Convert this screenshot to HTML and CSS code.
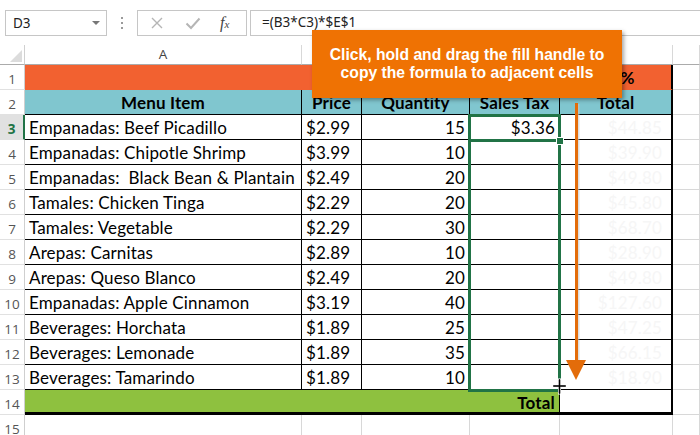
FILE: index.html
```html
<!DOCTYPE html>
<html>
<head>
<meta charset="utf-8">
<link rel="stylesheet" href="styles.css">
</head>
<body>
<div class="app">
  <div class="fbar">
    <div class="namebox"><span class="nb-text">D3</span><span class="nb-arrow"></span></div>
    <div class="grip"><i></i><i></i><i></i></div>
    <div class="fbtns">
      <svg class="ic" width="14" height="14" viewBox="0 0 14 14"><path d="M2 2 L12 12 M12 2 L2 12" stroke="#b5b5b5" stroke-width="1.4" fill="none"/></svg>
      <svg class="ic" width="16" height="14" viewBox="0 0 16 14"><path d="M1.5 7.5 L6 12 L14.5 2.5" stroke="#b5b5b5" stroke-width="2" fill="none"/></svg>
      <span class="fx"><span class="fx-f">f</span><span class="fx-x">x</span></span>
    </div>
    <div class="formula">=(B3*C3)*$E$1</div>
  </div>

  <div class="sheet">
    <div class="corner"><span class="tri"></span></div>
    <div class="ch">A</div><div class="ch"></div><div class="ch"></div><div class="ch"></div><div class="ch"></div><div class="ch"></div>

    <div class="rh">1</div>
    <div class="c orange span4"></div>
    <div class="c orange e bold center">7.5%</div>
    <div class="c"></div>

    <div class="rh">2</div>
    <div class="c t teal bold center">Menu Item</div>
    <div class="c t teal bold center">Price</div>
    <div class="c t teal bold center">Quantity</div>
    <div class="c t teal bold center">Sales Tax</div>
    <div class="c t teal bold center e">Total</div>
    <div class="c"></div>

    <div class="rh act">3</div>
    <div class="c t">Empanadas: Beef Picadillo</div><div class="c t">$2.99</div><div class="c t right">15</div><div class="c t right">$3.36</div><div class="c t e ghost">$44.85</div><div class="c"></div>

    <div class="rh">4</div>
    <div class="c t">Empanadas: Chipotle Shrimp</div><div class="c t">$3.99</div><div class="c t right">10</div><div class="c t"></div><div class="c t e ghost">$39.90</div><div class="c"></div>

    <div class="rh">5</div>
    <div class="c t">Empanadas:&nbsp; Black Bean &amp; Plantain</div><div class="c t">$2.49</div><div class="c t right">20</div><div class="c t"></div><div class="c t e ghost">$49.80</div><div class="c"></div>

    <div class="rh">6</div>
    <div class="c t">Tamales: Chicken Tinga</div><div class="c t">$2.29</div><div class="c t right">20</div><div class="c t"></div><div class="c t e ghost">$45.80</div><div class="c"></div>

    <div class="rh">7</div>
    <div class="c t">Tamales: Vegetable</div><div class="c t">$2.29</div><div class="c t right">30</div><div class="c t"></div><div class="c t e ghost">$68.70</div><div class="c"></div>

    <div class="rh">8</div>
    <div class="c t">Arepas: Carnitas</div><div class="c t">$2.89</div><div class="c t right">10</div><div class="c t"></div><div class="c t e ghost">$28.90</div><div class="c"></div>

    <div class="rh">9</div>
    <div class="c t">Arepas: Queso Blanco</div><div class="c t">$2.49</div><div class="c t right">20</div><div class="c t"></div><div class="c t e ghost">$49.80</div><div class="c"></div>

    <div class="rh">10</div>
    <div class="c t">Empanadas: Apple Cinnamon</div><div class="c t">$3.19</div><div class="c t right">40</div><div class="c t"></div><div class="c t e ghost">$127.60</div><div class="c"></div>

    <div class="rh">11</div>
    <div class="c t">Beverages: Horchata</div><div class="c t">$1.89</div><div class="c t right">25</div><div class="c t"></div><div class="c t e ghost">$47.25</div><div class="c"></div>

    <div class="rh">12</div>
    <div class="c t">Beverages: Lemonade</div><div class="c t">$1.89</div><div class="c t right">35</div><div class="c t"></div><div class="c t e ghost">$66.15</div><div class="c"></div>

    <div class="rh">13</div>
    <div class="c t">Beverages: Tamarindo</div><div class="c t">$1.89</div><div class="c t right">10</div><div class="c t"></div><div class="c t e ghost">$18.90</div><div class="c"></div>

    <div class="rh">14</div>
    <div class="c green span4 bold right tot">Total</div>
    <div class="c e tot"></div>
    <div class="c"></div>

    <div class="rh">15</div>
    <div class="c"></div><div class="c"></div><div class="c"></div><div class="c"></div><div class="c"></div><div class="c"></div>
  </div>

  <div class="sel"></div>
  <div class="active"></div>
  <div class="handle"></div>
  <svg class="arrow" width="24" height="280" viewBox="0 0 24 280">
    <rect x="11.5" y="1" width="3" height="258" fill="#c8c8c8" opacity="0.6"/>
    <rect x="10" y="0" width="3" height="258" fill="#e36c0a"/>
    <path d="M1 257 L21 257 L11 277 Z" fill="#e36c0a"/>
  </svg>
  <svg class="cursor" width="15" height="17" viewBox="0 0 15 17">
    <path d="M6 0.5 H9 V6.5 H14.5 V9.5 H9 V16.5 H6 V9.5 H0.5 V6.5 H6 Z" fill="#fff"/>
    <path d="M7 1.5 H8 V7.5 H13.5 V8.5 H8 V15.5 H7 V8.5 H1.5 V7.5 H7 Z" fill="#000" stroke="#000" stroke-width="0.6"/>
  </svg>
  <div class="callout">
    <span>Click, hold and drag the fill handle to</span>
    <span>copy the formula to adjacent cells</span>
  </div>
</div>
</body>
</html>
```

FILE: styles.css
```css
html, body {
  margin: 0;
  padding: 0;
  background: #fff;
}

.app {
  position: relative;
  width: 700px;
  height: 435px;
  overflow: hidden;
  font-family: "Lato", "Liberation Sans", sans-serif;
}

/* formula bar */
.fbar {
  height: 45px;
  box-sizing: border-box;
  padding: 10px 0 0 5px;
  display: flex;
  align-items: flex-start;
  font-family: "Noto Sans", "Open Sans", sans-serif;
  font-size: 13.5px;
  color: #222;
}

.namebox {
  width: 102px;
  height: 26px;
  box-sizing: border-box;
  border: 1px solid #c6c6c6;
  display: flex;
  align-items: center;
  justify-content: space-between;
  padding: 0 6px 0 7px;
}

.nb-arrow {
  width: 0;
  height: 0;
  border-left: 4px solid transparent;
  border-right: 4px solid transparent;
  border-top: 4px solid #777;
}

.grip {
  width: 30px;
  height: 26px;
  display: flex;
  flex-direction: column;
  align-items: center;
  justify-content: center;
  gap: 3px;
}

.grip i {
  display: block;
  width: 2px;
  height: 2px;
  background: #9a9a9a;
}

.fbtns {
  width: 110px;
  height: 26px;
  box-sizing: border-box;
  border: 1px solid #c6c6c6;
  display: flex;
  align-items: center;
  padding-left: 12px;
}

.fbtns .ic:nth-child(1) {
  margin-right: 21px;
}

.fbtns .ic:nth-child(2) {
  margin-right: 19px;
}

.fx {
  font-family: "Liberation Serif", serif;
  font-style: italic;
  color: #444;
  font-size: 16px;
  line-height: 1;
}

.fx-x {
  font-size: 11px;
}

.formula {
  flex: 1;
  height: 26px;
  box-sizing: border-box;
  margin-left: 3px;
  border: 1px solid #c6c6c6;
  border-right: none;
  padding-left: 11px;
  line-height: 23px;
  font-size: 13.5px;
}

/* sheet grid */
.sheet {
  display: grid;
  grid-template-columns: 25px 277px 60px 108px 90px 113px 27px;
  grid-template-rows: 20px;
  grid-auto-rows: 25px;
}

.corner {
  position: relative;
  border-right: 1px solid #d0d0d0;
  border-bottom: 1px solid #ababab;
}

.tri {
  position: absolute;
  right: 2px;
  bottom: 2px;
  width: 0;
  height: 0;
  border-left: 12px solid transparent;
  border-bottom: 12px solid #dcdcdc;
}

.ch {
  box-sizing: border-box;
  border-right: 1px solid #d8d8d8;
  border-bottom: 1px solid #ababab;
  font-family: "Open Sans", "Noto Sans", sans-serif;
  font-size: 13.5px;
  color: #444;
  text-align: center;
  line-height: 19px;
}

.rh {
  box-sizing: border-box;
  border-right: 1px solid #cfcfcf;
  border-bottom: 1px solid #e1e1e1;
  font-family: "Open Sans", "Noto Sans", sans-serif;
  font-size: 13.5px;
  color: #555;
  text-align: center;
  line-height: 22px;
  padding-top: 3px;
  overflow: hidden;
}

.rh.act {
  background: #e1e1e1;
  color: #217346;
  font-weight: bold;
  border-right: 2px solid #217346;
}

.c {
  box-sizing: border-box;
  border-right: 1px solid #d8d8d8;
  border-bottom: 1px solid #d8d8d8;
  padding: 2px 4px 0 4px;
  font-size: 17px;
  letter-spacing: 0.15px;
  line-height: 21px;
  color: #000;
  white-space: nowrap;
  overflow: hidden;
}

.c.t {
  border-color: #000;
}

.span4 {
  grid-column: span 4;
}

.bold {
  font-weight: bold;
}

.center {
  text-align: center;
}

.right {
  text-align: right;
}

.orange {
  background: #f26130;
  border-color: #f26130;
}

.teal {
  background: #80c6cf;
}

.green {
  background: #8ec13f;
  border-right-color: #000;
}

.c.e {
  border-right: 2px solid #000;
}

.ghost {
  text-align: right;
  color: #f6f6f6;
  padding-right: 9px;
}

.tot {
  border-bottom: 3px solid #000;
}

/* overlays */
.sel {
  position: absolute;
  left: 468px;
  top: 114px;
  width: 93px;
  height: 278px;
  box-sizing: border-box;
  border: 3px solid #217346;
}

.active {
  position: absolute;
  left: 468px;
  top: 139px;
  width: 93px;
  height: 3px;
  background: #217346;
}

.handle {
  position: absolute;
  left: 556px;
  top: 137px;
  width: 6px;
  height: 6px;
  background: #217346;
  border: 1px solid #fff;
}

.arrow {
  position: absolute;
  left: 565px;
  top: 103px;
}

.cursor {
  position: absolute;
  left: 552px;
  top: 378px;
}

.callout {
  position: absolute;
  left: 312px;
  top: 30px;
  width: 310px;
  height: 68px;
  background: #ef7203;
  box-shadow: 2px 2px 4px rgba(0, 0, 0, 0.35);
  display: flex;
  flex-direction: column;
  align-items: center;
  justify-content: center;
  font-family: "Liberation Sans", Arial, sans-serif;
  font-weight: bold;
  font-size: 15.7px;
  line-height: 18px;
  color: #fff;
}
```
